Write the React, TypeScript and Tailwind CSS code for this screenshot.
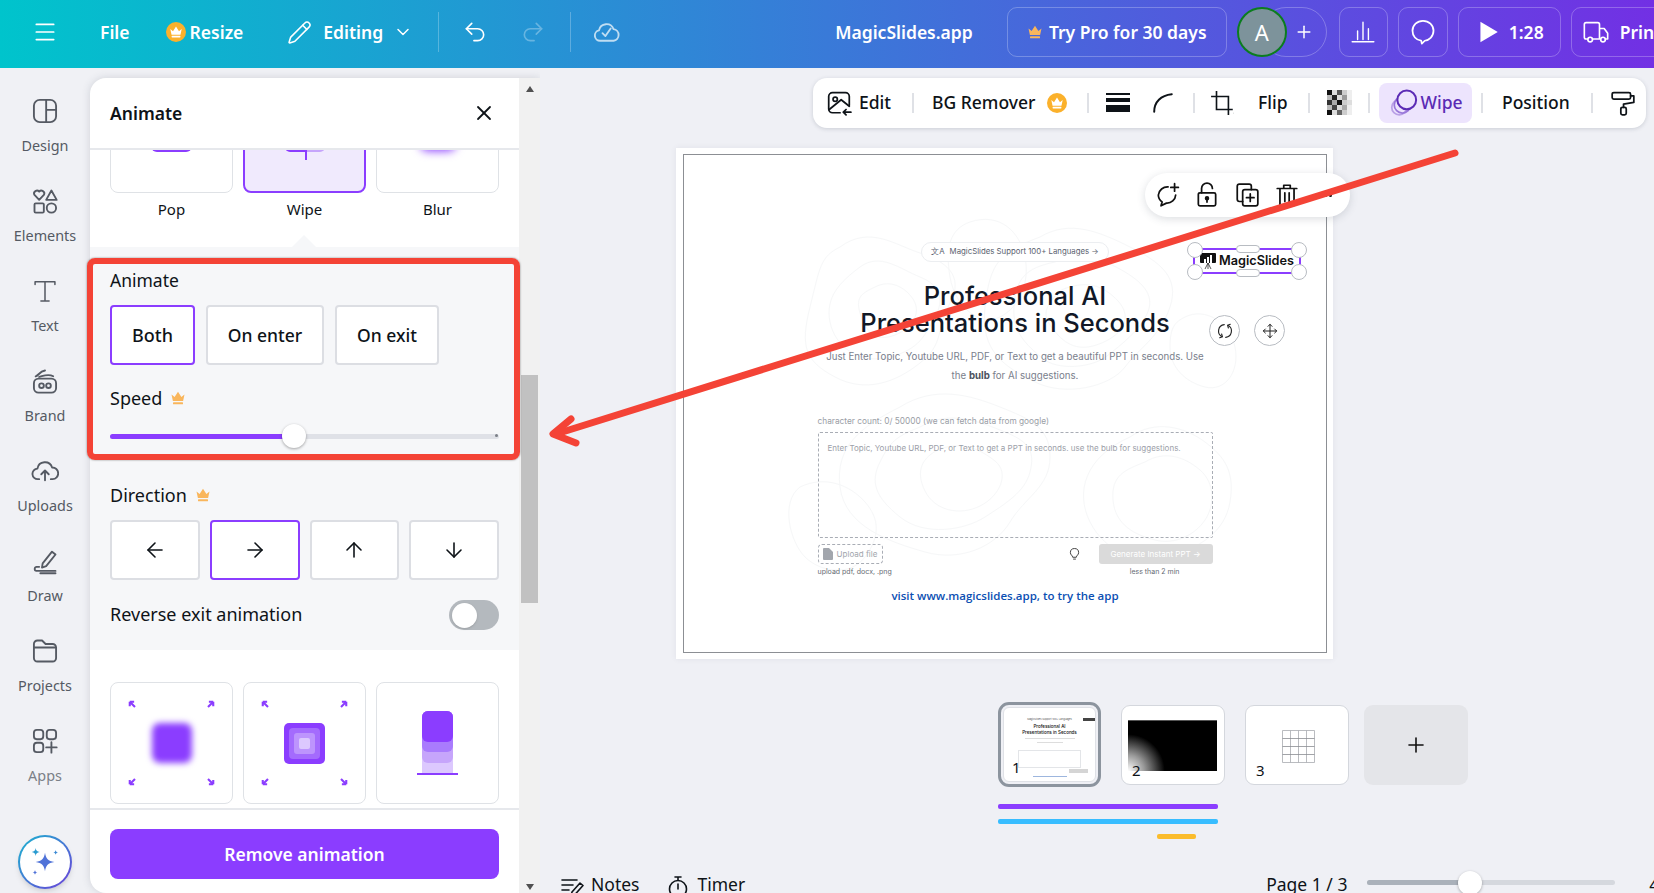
import React from "react";
import { Menu, Pencil, ChevronDown, Undo2, Redo2, Plus, X, ArrowLeft, ArrowRight, ArrowUp, ArrowDown, Move } from "lucide-react";

const ui = "font-['Noto_Sans',sans-serif]";

const Crown = ({ className = "", color = "#f9b65c" }: { className?: string; color?: string }) => (
  <svg viewBox="0 0 16 16" className={className} fill={color}>
    <path d="M1.5 4.5 4.6 7 8 1.8 11.4 7l3.1-2.5-1.4 6.6H2.9z" />
    <rect x="3" y="12.2" width="10" height="2" rx="0.5" />
  </svg>
);

const CrownBadge = ({ className = "" }: { className?: string }) => (
  <span className={`flex items-center justify-center rounded-full bg-[#fbb12b] shrink-0 ${className}`}>
    <Crown className="w-[70%] h-[70%]" color="#ffffff" />
  </span>
);

const stroke = { fill: "none", stroke: "currentColor", strokeWidth: 1.6, strokeLinecap: "round" as const, strokeLinejoin: "round" as const };

const navItems: { label: string; icon: React.ReactNode; muted?: boolean }[] = [
  { label: "Design", icon: <svg viewBox="0 0 24 24" className="w-7 h-7" {...stroke}><rect x="2.5" y="2.5" width="19" height="19" rx="5" /><path d="M13 2.5v19M13 11h8.5" /></svg> },
  { label: "Elements", icon: <svg viewBox="0 0 24 24" className="w-7 h-7" {...stroke}><path d="M7 11 2.8 6.6a2.5 2.5 0 0 1 4.2-2.6 2.5 2.5 0 0 1 4.2 2.6z" /><path d="M17.5 3 22 11h-9z" /><rect x="3" y="14" width="8" height="8" rx="1" /><circle cx="17.5" cy="18" r="4" /></svg> },
  { label: "Text", icon: <svg viewBox="0 0 24 24" className="w-7 h-7" {...stroke} strokeWidth={1.3}><path d="M3.500 6.500V4h17v2.500M12 4v16.500M8.500 20.500h7" /></svg> },
  { label: "Brand", icon: <svg viewBox="0 0 24 24" className="w-7 h-7" {...stroke}><rect x="2.5" y="10" width="19" height="12" rx="4" /><path d="M4 8c3-1 3-4 8-5M7 8.5c4-1 8-3 12-.5" /><circle cx="9" cy="16" r="2" /><circle cx="15" cy="16" r="2" /></svg> },
  { label: "Uploads", icon: <svg viewBox="0 0 24 24" className="w-7 h-7" {...stroke}><path d="M7 19H6a4.5 4.5 0 0 1-.5-9 6.5 6.5 0 0 1 12.6-1 5 5 0 0 1 .4 10H17" /><path d="M12 20v-8M8.8 14.8 12 11.6l3.2 3.2" /></svg> },
  { label: "Draw", icon: <svg viewBox="0 0 24 24" className="w-7 h-7" {...stroke}><path d="m10 14 8-10 3 2.4-8 10-3.600 1.200z" /><path d="M7 17H4.500a1.800 1.800 0 0 0 0 3.500H21M8 22.500h13" /></svg> },
  { label: "Projects", icon: <svg viewBox="0 0 24 24" className="w-7 h-7" {...stroke}><path d="M2.500 9V6a3 3 0 0 1 3-3h4l3 3h6a3 3 0 0 1 3 3v9a3 3 0 0 1-3 3h-13a3 3 0 0 1-3-3zM2.500 9h19" /></svg> },
  { label: "Apps", muted: true, icon: <svg viewBox="0 0 24 24" className="w-7 h-7" {...stroke}><rect x="2.500" y="2.500" width="8" height="8" rx="2.500" /><rect x="13.500" y="2.500" width="8" height="8" rx="2.500" /><rect x="2.500" y="13.500" width="8" height="8" rx="2.500" /><path d="M17.500 13v9M13 17.500h9" /></svg> },
];

const Sep = ({ className = "" }: { className?: string }) => <div className={`w-[2px] h-[20px] bg-[#dfe1e6] shrink-0 ${className}`} />;

const TopBtn = ({ className = "", children }: { className?: string; children: React.ReactNode }) => (
  <div className={`h-[50px] flex items-center justify-center rounded-[10px] border border-white/25 shrink-0 ${className}`}>{children}</div>
);

const Header = () => (
  <div className="h-[68px] shrink-0 flex items-center pb-[4px] bg-linear-to-r/srgb from-[#00c4cc] to-[#7230e4] text-white overflow-hidden text-[17.500px] font-semibold whitespace-nowrap">
    <Menu className="w-[26px] h-[26px] ml-[32px] shrink-0" strokeWidth={1.6} />
    <span className="ml-[42px] w-[30px]">File</span>
    <CrownBadge className="ml-[36px] w-[20px] h-[20px]" />
    <span className="ml-[4px] w-[54px]">Resize</span>
    <Pencil className="ml-[44px] w-[25px] h-[25px] shrink-0" strokeWidth={1.5} />
    <span className="ml-[11px] w-[60px]">Editing</span>
    <ChevronDown className="ml-[10px] w-[20px] h-[20px] shrink-0" strokeWidth={1.8} />
    <div className="ml-[25px] w-px h-[40px] bg-white/25 shrink-0" />
    <Undo2 className="ml-[23px] w-[26px] h-[26px] shrink-0" strokeWidth={1.5} />
    <Redo2 className="ml-[32px] w-[26px] h-[26px] opacity-30 shrink-0" strokeWidth={1.5} />
    <div className="ml-[24px] w-px h-[40px] bg-white/25 shrink-0" />
    <svg viewBox="0 0 24 24" className="ml-[21px] w-[28px] h-[28px] opacity-70 shrink-0" {...stroke}>
      <path d="M7 19.500a4.500 4.500 0 0 1-1-8.900 6.500 6.500 0 0 1 12.500-1 5 5 0 0 1 0 9.900z" />
      <path d="m9 13 2.500 2.500L16 9" />
    </svg>
    <span className="ml-[215px] w-[139px]">MagicSlides.app</span>
    <TopBtn className="ml-[34px] w-[220px]">
      <Crown className="w-[16px] h-[16px] mr-[6px]" />
      <span>Try Pro for 30 days</span>
    </TopBtn>
    <div className="relative ml-[10px] w-[102px] h-[50px] shrink-0">
      <div className="absolute left-[24px] top-0 w-[66px] h-[50px] rounded-full border border-white/25 flex items-center justify-end pr-[12px]">
        <Plus className="w-[20px] h-[20px]" strokeWidth={1.8} />
      </div>
      <div className="absolute left-0 top-0 w-[50px] h-[50px] rounded-full border-2 border-[#0b7d1e] bg-[#7d939b] flex items-center justify-center text-[22px] font-normal">A</div>
    </div>
    <TopBtn className="w-[49px]">
      <svg viewBox="0 0 24 24" className="w-[26px] h-[26px]" {...stroke} strokeWidth={1.3}><path d="M2 21h20M7 19v-8M12 19V3M17 19V9" /></svg>
    </TopBtn>
    <TopBtn className="ml-[10px] w-[50px]">
      <svg viewBox="0 0 24 24" className="w-[28px] h-[28px]" {...stroke} strokeWidth={1.5}><path d="M12 2.500c5 0 9 3.500 9 8.500s-4 8-7.500 8.500L11 22l-.6-2.600C6 19 3 15.500 3 11c0-5 4-8.500 9-8.500z" /></svg>
    </TopBtn>
    <TopBtn className="ml-[10px] w-[103px]">
      <svg viewBox="0 0 24 24" className="w-[26px] h-[26px]" fill="currentColor"><path d="M5 2.500 21 12 5 21.500z" /></svg>
      <span className="ml-[8px]">1:28</span>
    </TopBtn>
    <TopBtn className="ml-[10px] w-[120px] !justify-start pl-[10px]">
      <svg viewBox="0 0 24 24" className="w-[28px] h-[28px]" {...stroke} strokeWidth={1.4}><path d="M5 18H3.500a1.500 1.500 0 0 1-1.500-1.500v-11A1.500 1.500 0 0 1 3.500 4h10A1.500 1.500 0 0 1 15 5.500V18H9M15 9h4l3 4v5h-2M15 18h1" /><circle cx="7" cy="18.500" r="2" /><circle cx="18" cy="18.500" r="2" /></svg>
      <span className="ml-[10px]">Print</span>
    </TopBtn>
  </div>
);

const Sidebar = () => (
  <div className="w-[90px] shrink-0 flex flex-col items-center pt-[29px] pb-[4px] bg-[#f0f1f5] text-[#555a63]">
    {navItems.map((item) => (
      <div key={item.label} className="h-[90px] flex flex-col items-center">
        <div className="h-[28px]">{item.icon}</div>
        <span className={`mt-[11px] text-[14.400px] leading-[20px] ${item.muted ? "text-[#7b7f87]" : ""}`}>{item.label}</span>
      </div>
    ))}
    <div className="mt-auto w-[54px] h-[54px] rounded-full p-[2px] bg-linear-to-br/srgb from-[#19b5cf] to-[#6d3fd9] shadow-md">
      <div className="w-full h-full rounded-full bg-white flex items-center justify-center">
        <svg viewBox="0 0 24 24" className="w-[32px] h-[32px]">
          <path d="M12 5c.7 4.500 2.300 6.200 7 7-4.700.8-6.300 2.500-7 7-.7-4.500-2.300-6.200-7-7 4.700-.8 6.300-2.500 7-7z" fill="#4f72d8" />
          <path d="M5 1.500c.3 2 1 2.700 3 3-2 .3-2.700 1-3 3-.3-2-1-2.700-3-3 2-.3 2.700-1 3-3z" fill="#2a9bd0" />
          <path d="M20 3c.2 1.200.6 1.600 1.800 1.800-1.200.2-1.600.6-1.800 1.800-.2-1.200-.6-1.600-1.800-1.800C19.400 4.600 19.800 4.200 20 3z" fill="#3a89d4" />
          <path d="M4.500 18c.2 1.200.6 1.600 1.800 1.800-1.200.2-1.600.6-1.800 1.800-.2-1.200-.6-1.600-1.800-1.800 1.200-.2 1.600-.6 1.800-1.800z" fill="#4f72d8" />
        </svg>
      </div>
    </div>
  </div>
);

const Corners = () => (
  <>
    {[
      "M2 2h5M2 2v5M2 2l6 6",
      "M14 2H9M14 2v5M14 2 8 8",
      "M2 14h5M2 14V9M2 14l6-6",
      "M14 14H9M14 14V9M14 14 8 8",
    ].map((d, i) => (
      <svg key={i} viewBox="0 0 16 16" className={`absolute w-[14px] h-[14px] text-[#8b3dff] ${i === 0 ? "left-[17px] top-[17px]" : i === 1 ? "right-[17px] top-[17px]" : i === 2 ? "left-[17px] bottom-[17px]" : "right-[17px] bottom-[17px]"}`} fill="none" stroke="currentColor" strokeWidth="2.400"><path d={d} /></svg>
    ))}
  </>
);

const Card = ({ className = "", children }: { className?: string; children?: React.ReactNode }) => (
  <div className={`relative h-[122px] rounded-[8px] border border-[#dfe2e6] flex items-center justify-center ${className}`}>{children}</div>
);

const Choice = ({ active, className = "", children }: { active?: boolean; className?: string; children: React.ReactNode }) => (
  <div className={`h-[60px] flex items-center justify-center rounded-[4px] bg-white ${active ? "border-2 border-[#8b3dff]" : "border-2 border-[#dcdee3]"} ${className}`}>{children}</div>
);

const Panel = () => (
  <div className="mt-[10px] w-[450px] shrink-0 flex rounded-l-[16px] overflow-hidden bg-white shadow-[0_0_8px_rgba(60,70,90,0.18)] text-[#0e1318]">
    <div className="w-[429px] flex flex-col">
      <div className="h-[72px] shrink-0 flex items-center justify-between pl-[20px] pr-[23px] border-b-2 border-[#e6e8ec]">
        <span className="text-[17.500px] font-semibold">Animate</span>
        <X className="w-[24px] h-[24px]" strokeWidth={1.8} />
      </div>
      <div className="flex-1 overflow-hidden">
        <div className="-mt-[79px]">
          <div className="grid grid-cols-3 gap-x-[10px] px-[20px]">
            <Card><div className="w-[41px] h-[40px] rounded-[6px] bg-[#8b3dff]" /></Card>
            <Card className="!border-2 !border-[#8b3dff] bg-[#f0eafd]">
              <div className="relative w-[40px] h-[40px] rounded-[5px] overflow-hidden flex">
                <div className="w-1/2 bg-[#8b3dff]" />
                <div className="w-1/2 bg-[#c6a5fb]" />
              </div>
              <div className="absolute left-[60px] top-[70px] w-[2px] h-[17px] bg-[#8b3dff]" />
            </Card>
            <Card><div className="w-[36px] h-[38px] rounded-[8px] bg-[#8b3dff] blur-[5px]" /></Card>
            <span className="mt-[6px] text-center text-[15px] leading-[20px]">Pop</span>
            <span className="mt-[6px] text-center text-[15px] leading-[20px]">Wipe</span>
            <span className="mt-[6px] text-center text-[15px] leading-[20px]">Blur</span>
          </div>
          <div className="relative mt-[28px] bg-[#f6f7f9] px-[20px] pt-[21px] pb-[20px]">
            <div className="absolute left-[202px] -top-[12px] w-0 h-0 border-x-[12px] border-x-transparent border-b-[12px] border-b-[#f6f7f9]" />
            <div className="text-[17.500px] leading-[24px]">Animate</div>
            <div className="mt-[13px] flex gap-[11px]">
              <Choice active className="w-[85px]"><span className="text-[18px] font-medium">Both</span></Choice>
              <Choice className="w-[118px]"><span className="text-[17.500px] font-medium">On enter</span></Choice>
              <Choice className="w-[104px]"><span className="text-[17.500px] font-medium">On exit</span></Choice>
            </div>
            <div className="mt-[21px] flex items-center text-[18px] leading-[24px]">Speed<Crown className="ml-[8px] w-[16px] h-[16px]" /></div>
            <div className="relative mt-[14px] h-[24px] flex items-center">
              <div className="w-full h-[5px] rounded-full bg-[#dfe1e7] overflow-hidden"><div className="w-[184px] h-full bg-[#8b3dff]" /></div>
              <div className="absolute left-[172px] top-0 w-[24px] h-[24px] rounded-full bg-white shadow-[0_1px_3px_rgba(0,0,0,0.35)]" />
              <div className="absolute right-[1px] top-[10px] w-[3px] h-[3px] rounded-full bg-[#7b7f87]" />
            </div>
            <div className="mt-[35px] flex items-center text-[18px] leading-[24px]">Direction<Crown className="ml-[8px] w-[16px] h-[16px]" /></div>
            <div className="mt-[13px] grid grid-cols-4 gap-[10px]">
              <Choice><ArrowLeft className="w-[24px] h-[24px]" strokeWidth={1.6} /></Choice>
              <Choice active><ArrowRight className="w-[24px] h-[24px]" strokeWidth={1.6} /></Choice>
              <Choice><ArrowUp className="w-[24px] h-[24px]" strokeWidth={1.6} /></Choice>
              <Choice><ArrowDown className="w-[24px] h-[24px]" strokeWidth={1.6} /></Choice>
            </div>
            <div className="mt-[20px] h-[30px] flex items-center justify-between">
              <span className="text-[18px] -mt-[2px]">Reverse exit animation</span>
              <div className="w-[50px] h-[30px] rounded-full bg-[#b4b9be] flex items-center pl-[3px]">
                <div className="w-[25px] h-[25px] rounded-full bg-white shadow-sm" />
              </div>
            </div>
          </div>
          <div className="grid grid-cols-3 gap-x-[10px] px-[20px] pt-[32px]">
            <Card><Corners /><div className="w-[40px] h-[40px] rounded-[8px] bg-[#8b3dff] blur-[3px]" /></Card>
            <Card>
              <Corners />
              <div className="w-[41px] h-[41px] rounded-[5px] bg-[#8b3dff] flex items-center justify-center">
                <div className="w-[31px] h-[31px] rounded-[4px] bg-[#a46bfd] flex items-center justify-center">
                  <div className="w-[21px] h-[21px] rounded-[3px] bg-[#bd94fd] flex items-center justify-center">
                    <div className="w-[11px] h-[11px] rounded-[2px] bg-[#dcc8fe]" />
                  </div>
                </div>
              </div>
            </Card>
            <Card>
              <div className="relative w-[41px] h-[64px]">
                <div className="absolute left-[5px] top-0 w-[31px] h-[62px] rounded-t-[6px] bg-[#dcc8fe]" />
                <div className="absolute left-[5px] top-0 w-[31px] h-[52px] rounded-[6px] bg-[#c6a5fb]" />
                <div className="absolute left-[5px] top-0 w-[31px] h-[41px] rounded-[6px] bg-[#a97bfd]" />
                <div className="absolute left-[5px] top-0 w-[31px] h-[31px] rounded-[6px] bg-[#8b3dff]" />
                <div className="absolute left-0 bottom-0 w-[41px] h-[2px] bg-[#8b3dff]" />
              </div>
            </Card>
          </div>
        </div>
      </div>
      <div className="h-[85px] shrink-0 border-t-2 border-[#e6e8ec] px-[20px] pt-[19px]">
        <div className="h-[50px] rounded-[8px] bg-[#8b3dff] flex items-center justify-center text-white text-[17.500px] font-semibold">Remove animation</div>
      </div>
    </div>
    <div className="w-[21px] bg-[#f1f1f1] flex flex-col items-center">
      <div className="mt-[8px] w-0 h-0 border-x-[4px] border-x-transparent border-b-[6px] border-b-[#505050]" />
      <div className="mt-[283px] w-[17px] h-[228px] bg-[#c1c1c1]" />
      <div className="mt-auto mb-[3px] w-0 h-0 border-x-[4px] border-x-transparent border-t-[6px] border-t-[#505050]" />
    </div>
  </div>
);

const Toolbar = () => (
  <div className="ml-[273px] mt-[10px] w-[833px] h-[50px] shrink-0 flex items-center pl-[13px] pb-[1px] rounded-[14px] bg-white shadow-[0_1px_4px_rgba(60,70,90,0.2)] text-[#0e1318] text-[17.500px] font-medium whitespace-nowrap">
    <svg viewBox="0 0 24 24" className="w-[26px] h-[26px] shrink-0" {...stroke}>
      <path d="M13 21H6a3.500 3.500 0 0 1-3.500-3.500V6A3.500 3.500 0 0 1 6 2.500h12A3.500 3.500 0 0 1 21.500 6v8" />
      <circle cx="8.500" cy="8.500" r="2" />
      <path d="m3 18 11-9 7.500 6M16 20.500h7M18.500 18l-2.500 2.500 2.500 2.500" />
    </svg>
    <span className="ml-[7px] w-[36px]">Edit</span>
    <Sep className="ml-[17px]" />
    <span className="ml-[18px] w-[106px]">BG Remover</span>
    <CrownBadge className="ml-[9px] w-[20px] h-[20px]" />
    <Sep className="ml-[20px]" />
    <div className="ml-[17px] w-[24px] flex flex-col gap-[3px]">
      <div className="h-[2px] bg-[#0e1318]" />
      <div className="h-[4px] bg-[#0e1318]" />
      <div className="h-[7px] bg-[#0e1318]" />
    </div>
    <svg viewBox="0 0 20 20" className="ml-[22px] w-[22px] h-[22px]" fill="none" stroke="#0e1318" strokeWidth="1.800" strokeLinecap="round"><path d="M2 18c0-9 6-15 16-16" /></svg>
    <Sep className="ml-[19px]" />
    <svg viewBox="0 0 24 24" className="ml-[15px] w-[26px] h-[26px]" fill="none" stroke="#0e1318" strokeWidth="1.500"><path d="M6 1v17h15M1 6h16v17" /><path d="M21.500 21.500h.1" /></svg>
    <span className="ml-[22px] w-[31px]">Flip</span>
    <Sep className="ml-[19px]" />
    <div className="ml-[17px] grid grid-cols-5 w-[25px] h-[25px] shrink-0">
      {["#111","#ddd","#555","#ccc","#eee","#bbb","#222","#ddd","#999","#eee","#333","#aaa","#111","#ccc","#ddd","#bbb","#444","#ddd","#aaa","#eee","#111","#ddd","#666","#ccc","#eee"].map((c, i) => (
        <svg key={i} viewBox="0 0 5 5" className="w-[5px] h-[5px]"><rect width="5" height="5" fill={c} /></svg>
      ))}
    </div>
    <Sep className="ml-[16px]" />
    <div className="ml-[9px] w-[93px] h-[40px] rounded-[8px] bg-[#ede4fd] flex items-center justify-center text-[#5b2bb5] shrink-0">
      <svg viewBox="0 0 24 24" className="w-[30px] h-[30px]" fill="none">
        <circle cx="9" cy="15.500" r="6" stroke="#b9a0e6" strokeWidth="1.400" />
        <circle cx="11.500" cy="13.500" r="6.500" stroke="#9a78d9" strokeWidth="1.400" />
        <circle cx="15" cy="9.500" r="7.500" fill="#ede4fd" stroke="#5b2bb5" strokeWidth="1.600" />
      </svg>
      <span className="ml-[2px]">Wipe</span>
    </div>
    <Sep className="ml-[9px]" />
    <span className="ml-[19px] w-[70px]">Position</span>
    <Sep className="ml-[19px]" />
    <svg viewBox="0 0 24 24" className="ml-[17px] w-[26px] h-[26px]" {...stroke}>
      <rect x="2" y="2.500" width="17" height="6" rx="1.500" />
      <path d="M19 5.500h3v6l-9.500 1.500v3" />
      <rect x="10" y="16" width="5" height="7" rx="1.500" />
    </svg>
  </div>
);

const contourPaths = [
  "M40 30c30-22 55-2 80 6s45 22 30 50-5 40-30 60-55 30-85 14S0 130 10 90 20 40 40 30z",
  "M60 50c20-15 40 2 60 10s25 22 15 40-15 32-45 40-55-10-60-35 10-40 30-55z",
  "M75 70c15-8 30 0 38 12s2 28-18 36-30-5-35-22 3-20 15-26z",
  "M240 20c30-18 60-5 90 10s50 30 40 60-30 40-45 60-60 30-90 15-55-30-50-75 15-55 55-70z",
  "M255 45c25-12 50-2 70 10s30 25 22 42-25 30-40 42-50 15-65 2-30-25-28-52 11-38 41-44z",
  "M270 70c20-6 35 0 48 14s8 30-12 40-35 8-48-6-15-22-8-32 8-13 20-16z",
  "M100 190c35-22 70-12 100 0s50 20 50 50-25 40-40 65-50 40-85 30-80-25-85-65 20-60 60-80z",
  "M120 210c30-18 60-5 85 5s30 20 25 40-25 32-45 45-60 20-85 0-30-35-20-55 15-25 40-35z",
  "M140 232c22-8 40 0 55 12s5 35-15 45-45 5-55-15-3-34 15-42z",
  "M330 220c25-18 55-10 75 5s30 30 25 60-30 45-60 55-65-5-80-35-5-65 40-85z",
  "M345 245c20-12 40-5 55 8s15 35 5 50-30 25-50 20-40-15-42-40 12-30 32-38z",
  "M0 270c25-12 50-2 65 15s15 35 0 55-45 15-60 0-25-55-5-70z",
  "M170 5c30-10 50 10 55 35s-5 50-25 60-45-10-50-40 0-48 20-55z",
  "M385 100c20-10 45 5 50 30s-10 45-30 40-35-20-35-40 5-25 15-30z",
];

const Slide = () => (
  <div className="relative ml-[136px] mt-[20px] w-[657px] h-[511px] shrink-0 bg-white p-[6px] pl-[7px] shadow-[0_0_6px_rgba(60,70,90,0.08)]">
    <div className="relative h-full border border-[#8c8f94] flex flex-col items-center font-['Inter',sans-serif]">
      <svg viewBox="0 0 440 370" className="absolute left-[96px] top-[62px] w-[480px] h-[370px] text-[#f6f7f8]" fill="none" stroke="currentColor" strokeWidth="1">
        {contourPaths.map((d, i) => <path key={i} d={d} />)}
      </svg>
      <div className="relative ml-[20px] w-[395px] flex flex-col items-center">
        <div className="mt-[87px] h-[20px] w-[188px] rounded-full border border-[#eceef1] bg-white flex items-center justify-center gap-[5px] text-[7.800px] text-[#5b6270]">
          <span>文A</span><span>MagicSlides Support 100+ Languages →</span>
        </div>
        <h1 className="mt-[20px] text-center text-[25.500px] leading-[27px] font-medium text-[#111827] whitespace-nowrap">Professional AI<br />Presentations in Seconds</h1>
        <p className="mt-[11px] text-center text-[9.700px] leading-[19px] text-[#7a808c] whitespace-nowrap">Just Enter Topic, Youtube URL, PDF, or Text to get a beautiful PPT in seconds. Use<br />the <b className="text-[#4b5260]">bulb</b> for AI suggestions.</p>
        <div className="mt-[30px] w-full text-[8.300px] leading-[12px] text-[#9a9ea6]">character count: 0/ 50000 (we can fetch data from google)</div>
        <div className="mt-[5px] w-full h-[106px] border border-dashed border-[#a9adb5] rounded-[2px] px-[9px] py-[9px] text-[8px] leading-[12px] text-[#9ca0a8] whitespace-nowrap">Enter Topic, Youtube URL, PDF, or Text to get a PPT in seconds. use the bulb for suggestions.</div>
        <div className="mt-[6px] w-full h-[20px] flex items-center">
          <div className="w-[65px] h-full border border-dashed border-[#a9adb5] rounded-[4px] flex items-center justify-center gap-[4px] text-[8px] text-[#a2a6ad]">
            <svg viewBox="0 0 10 12" className="w-[10px] h-[12px]" fill="#a2a6ad"><path d="M1 0h5l4 4v7a1 1 0 0 1-1 1H1a1 1 0 0 1-1-1V1a1 1 0 0 1 1-1z" /></svg>
            <span>Upload file</span>
          </div>
          <svg viewBox="0 0 12 14" className="ml-[186px] w-[11px] h-[13px]" fill="none" stroke="#333" strokeWidth="1"><path d="M4 10c0-2-2.500-2.500-2.500-5a4.500 4.500 0 0 1 9 0c0 2.500-2.500 3-2.500 5zM4.500 12h3" /></svg>
          <div className="ml-auto w-[114px] h-full rounded-[3px] bg-[#dadada] flex items-center justify-center text-[8px] text-white">Generate Instant PPT →</div>
        </div>
        <div className="mt-[3px] w-full flex justify-between text-[7px] leading-[10px] text-[#666b73]">
          <span>upload pdf, docx, .png</span>
          <span className="mr-[33px]">less than 2 min</span>
        </div>
        <div className="mt-[11px] mr-[20px] text-[11.500px] leading-[16px] font-semibold text-[#0b4fb3] font-['Open_Sans',sans-serif] whitespace-nowrap">visit www.magicslides.app, to try the app</div>
      </div>
    </div>
    <div className="absolute left-[517px] top-[100px] w-[108px] h-[26px] flex items-center justify-center border-2 border-[#8b3dff]">
      <svg viewBox="0 0 16 16" className="w-[16px] h-[16px] mr-[3px]" fill="#111"><rect x="0" y="0" width="16" height="10" rx="1" /><path d="M4 6h2v4H4zM7 4h2v6H7zM10 2h2v8h-2z" fill="#fff" /><path d="M8 10v6M8 10l-3 6M8 10l3 6" stroke="#111" strokeWidth="0.700" /></svg>
      <span className="font-['Inter',sans-serif] text-[12.700px] font-semibold text-[#111] leading-none">MagicSlides</span>
      <div className="absolute -left-[8px] -top-[8px] w-[16px] h-[16px] rounded-full bg-white border border-[#b8bcc2]" />
      <div className="absolute -right-[8px] -top-[8px] w-[16px] h-[16px] rounded-full bg-white border border-[#b8bcc2]" />
      <div className="absolute -left-[8px] -bottom-[8px] w-[16px] h-[16px] rounded-full bg-white border border-[#b8bcc2]" />
      <div className="absolute -right-[8px] -bottom-[8px] w-[16px] h-[16px] rounded-full bg-white border border-[#b8bcc2]" />
      <div className="absolute left-[41px] -top-[5px] w-[24px] h-[8px] rounded-full bg-white border border-[#b8bcc2]" />
      <div className="absolute left-[41px] -bottom-[5px] w-[24px] h-[8px] rounded-full bg-white border border-[#b8bcc2]" />
    </div>
    <div className="absolute left-[533px] top-[167px] w-[31px] h-[31px] rounded-full bg-white border border-[#b8bcc2] flex items-center justify-center">
      <svg viewBox="0 0 24 24" className="w-[18px] h-[18px] text-[#222]" {...stroke} strokeWidth={1.500}>
        <path d="M11 3.500A8.500 8.500 0 0 0 8 19.500M13 20.500a8.500 8.500 0 0 0 3-16" />
        <path d="m5 21 3.500-1.500L7.500 16M19 3l-3.500 1.500 1 3.500" />
      </svg>
    </div>
    <div className="absolute left-[578px] top-[167px] w-[31px] h-[31px] rounded-full bg-white border border-[#b8bcc2] flex items-center justify-center"><Move className="w-[16px] h-[16px] text-[#222]" strokeWidth={1.5} /></div>
    <div className="absolute left-[469px] top-[25px] w-[205px] h-[44px] rounded-full bg-white shadow-[0_2px_8px_rgba(60,70,90,0.18)] flex items-center pl-[9px] gap-[14px] text-[#111]">
      <svg viewBox="0 0 24 24" className="w-[26px] h-[26px]" {...stroke}><path d="M13 4.500A8.500 8.500 0 0 0 4 12c0 3 1.500 5 3.500 6.500L6.500 22l5-2.500A8 8 0 0 0 20 12M19 1.500v7M15.500 5h7" /></svg>
      <svg viewBox="0 0 24 24" className="w-[26px] h-[26px]" {...stroke}><rect x="4" y="10" width="16" height="12" rx="1.500" /><path d="M7 10V6a5 5 0 0 1 10 0" /><circle cx="12" cy="15" r="1.300" fill="currentColor" /><path d="M12 15v3.500" /></svg>
      <svg viewBox="0 0 24 24" className="w-[26px] h-[26px]" {...stroke}><rect x="8" y="7" width="14" height="15" rx="2" /><path d="M8 18H5a2 2 0 0 1-2-2V4a2 2 0 0 1 2-2h9a2 2 0 0 1 2 2v3M15 11v7M11.500 14.500h7" /></svg>
      <svg viewBox="0 0 24 24" className="w-[26px] h-[26px]" {...stroke}><path d="M3 6h18M9 6V3h6v3M5.500 6v15a1 1 0 0 0 1 1h11a1 1 0 0 0 1-1V6M10 10v8M14 10v8" /></svg>
      <div className="ml-[5px] flex gap-[2px]"><div className="w-[3px] h-[3px] rounded-full bg-[#111]" /><div className="w-[3px] h-[3px] rounded-full bg-[#111]" /><div className="w-[3px] h-[3px] rounded-full bg-[#111]" /></div>
    </div>
  </div>
);

const Thumbs = () => (
  <div className="ml-[458px] mt-[43px] shrink-0">
    <div className="flex items-center">
      <div className="relative w-[103px] h-[85px] rounded-[11px] border-[3px] border-[#8c949e] p-[2px]">
        <div className="relative h-full rounded-[6px] bg-white border border-[#dfe1e6] flex flex-col items-center pt-[10px] overflow-hidden font-['Inter',sans-serif]">
          <span className="text-[2.500px] leading-[3px] text-[#555] whitespace-nowrap">MagicSlides Support 100+ Languages</span>
          <span className="mt-[3px] text-[4.500px] leading-[5.500px] text-center text-[#111] font-medium whitespace-nowrap">Professional AI<br />Presentations in Seconds</span>
          <div className="mt-[3px] w-[50px] h-[1px] bg-[#ddd]" />
          <div className="mt-[3px] w-[26px] h-[1px] bg-[#ddd]" />
          <div className="mt-[7px] w-[63px] h-[18px] border border-[#e3e5e8]" />
          <div className="mt-[1px] self-end mr-[7px] w-[19px] h-[4px] bg-[#d5d5d5]" />
          <div className="mt-[3px] w-[34px] h-[1px] bg-[#9db6de]" />
          <div className="absolute right-0 top-[10px] w-[12px] h-[3px] bg-[#444]" />
        </div>
        <span className="absolute left-[11px] bottom-[9px] text-[15px] leading-[16px] text-[#0e1318]">1</span>
      </div>
      <div className="relative ml-[20px] w-[104px] h-[80px] rounded-[9px] bg-white border border-[#d4d7dd] flex items-start pl-[6px] pt-[14px]">
        <div className="w-[89px] h-[51px] border-t border-[#555] bg-[radial-gradient(circle_at_0%_100%,#ffffff_0%,#999_16%,#000000_36%)]" />
        <span className="absolute left-[10px] bottom-[6px] text-[15px] leading-[16px] text-[#0e1318]">2</span>
      </div>
      <div className="relative ml-[20px] w-[104px] h-[80px] rounded-[9px] bg-white border border-[#d4d7dd] flex justify-center pt-[24px] pl-[2px]">
        <svg viewBox="0 0 33 33" className="w-[33px] h-[33px]" fill="none" stroke="#a8abb0" strokeWidth="0.800"><path d="M.5.500h32v32H.5zM8.500.500v32M16.500.500v32M24.500.500v32" /><path d="M.5 8.500h32M.5 16.500h32M.5 24.500h32" stroke="#8a8d92" /></svg>
        <span className="absolute left-[10px] bottom-[6px] text-[15px] leading-[16px] text-[#0e1318]">3</span>
      </div>
      <div className="ml-[15px] w-[104px] h-[80px] rounded-[9px] bg-[#e4e5e9] flex items-center justify-center">
        <Plus className="w-[24px] h-[24px] text-[#111]" strokeWidth={1.6} />
      </div>
    </div>
    <div className="mt-[17px] w-[220px] h-[5px] rounded-[2px] bg-[#8b3dff]" />
    <div className="mt-[10px] w-[220px] h-[5px] rounded-[2px] bg-[#38bdff]" />
    <div className="mt-[10px] ml-[159px] w-[39px] h-[5px] rounded-[2px] bg-[#fbbc2c]" />
  </div>
);

const BottomBar = () => (
  <div className="mt-auto h-[18px] shrink-0 flex items-start pl-[20px] text-[#0e1318] text-[17.500px] leading-[18px] whitespace-nowrap">
    <svg viewBox="0 0 24 24" className="w-[24px] h-[24px] shrink-0" {...stroke}><path d="M2 5h15M2 10h11M2 15h7M2 20h4" /><path d="m11 21 1-4 8-9 3 2.500-8 9z" /></svg>
    <span className="ml-[7px] w-[52px]">Notes</span>
    <svg viewBox="0 0 24 24" className="ml-[27px] w-[24px] h-[24px] shrink-0" {...stroke}><circle cx="12" cy="14" r="8.500" /><path d="M12 9v5M9 2h6M12 2v3" /></svg>
    <span className="ml-[7px] w-[48px]">Timer</span>
    <span className="ml-[521px] w-[80px]">Page 1 / 3</span>
    <div className="relative shrink-0 ml-[21px] mt-[5px] w-[248px] h-[5px] rounded-full bg-[#d5d8de]">
      <div className="w-[102px] h-full rounded-full bg-[#aab1ba]" />
      <div className="absolute left-[91px] -top-[9px] w-[24px] h-[24px] rounded-full bg-white shadow-[0_1px_3px_rgba(0,0,0,0.3)]" />
    </div>
    <span className="ml-[34px]">4</span>
  </div>
);

const App = () => (
  <div className={`relative w-[1654px] h-[893px] overflow-hidden flex flex-col bg-[#f0f1f5] ${ui}`}>
    <Header />
    <div className="flex-1 flex min-h-0">
      <Sidebar />
      <Panel />
      <div className="flex-1 min-w-0 flex flex-col bg-[#eff0f5]">
        <Toolbar />
        <Slide />
        <Thumbs />
        <BottomBar />
      </div>
    </div>
    <div className="absolute left-[87px] top-[258px] w-[433px] h-[202px] rounded-[8px] border-[6px] border-[#f44336] shadow-[0_0_2px_rgba(0,0,0,0.5)] pointer-events-none" />
    <svg className="absolute inset-0 w-full h-full pointer-events-none" viewBox="0 0 1654 893" fill="none" stroke="#f44336" strokeWidth="7" strokeLinecap="round" strokeLinejoin="round">
      <path d="M1455 153 556 434" />
      <path d="m571 419-18 15 23 9" />
    </svg>
  </div>
);

export default App;
